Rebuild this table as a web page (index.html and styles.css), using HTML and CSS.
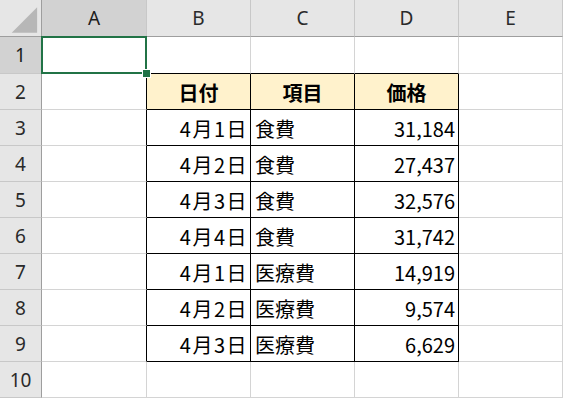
FILE: index.html
```html
<!DOCTYPE html>
<html lang="ja">
<head>
<meta charset="utf-8">
<link rel="stylesheet" href="styles.css">
</head>
<body>
<div class="sheet">
  <div class="grid">
    <div class="corner"><svg width="42" height="37" viewBox="0 0 42 37"><polygon points="12,33 38,33 38,7" fill="#b7b7b7"/></svg></div>
    <div class="ch sel">A</div>
    <div class="ch">B</div>
    <div class="ch">C</div>
    <div class="ch">D</div>
    <div class="ch">E</div>

    <div class="rh sel">1</div>
    <div class="c"></div>
    <div class="c tt"></div>
    <div class="c tt"></div>
    <div class="c tt"></div>
    <div class="c"></div>

    <div class="rh">2</div>
    <div class="c tl"></div>
    <div class="c t th">日付</div>
    <div class="c t th">項目</div>
    <div class="c t th">価格</div>
    <div class="c"></div>

    <div class="rh">3</div>
    <div class="c tl"></div>
    <div class="c t r d">4月1日</div>
    <div class="c t l">食費</div>
    <div class="c t r">31,184</div>
    <div class="c"></div>

    <div class="rh">4</div>
    <div class="c tl"></div>
    <div class="c t r d">4月2日</div>
    <div class="c t l">食費</div>
    <div class="c t r">27,437</div>
    <div class="c"></div>

    <div class="rh">5</div>
    <div class="c tl"></div>
    <div class="c t r d">4月3日</div>
    <div class="c t l">食費</div>
    <div class="c t r">32,576</div>
    <div class="c"></div>

    <div class="rh">6</div>
    <div class="c tl"></div>
    <div class="c t r d">4月4日</div>
    <div class="c t l">食費</div>
    <div class="c t r">31,742</div>
    <div class="c"></div>

    <div class="rh">7</div>
    <div class="c tl"></div>
    <div class="c t r d">4月1日</div>
    <div class="c t l">医療費</div>
    <div class="c t r">14,919</div>
    <div class="c"></div>

    <div class="rh">8</div>
    <div class="c tl"></div>
    <div class="c t r d">4月2日</div>
    <div class="c t l">医療費</div>
    <div class="c t r">9,574</div>
    <div class="c"></div>

    <div class="rh">9</div>
    <div class="c tl"></div>
    <div class="c t r d">4月3日</div>
    <div class="c t l">医療費</div>
    <div class="c t r">6,629</div>
    <div class="c"></div>

    <div class="rh">10</div>
    <div class="c"></div>
    <div class="c"></div>
    <div class="c"></div>
    <div class="c"></div>
    <div class="c"></div>
  </div>
  <div class="selection"></div>
  <div class="handle"></div>
</div>
</body>
</html>
```
FILE: styles.css
```css
html, body {
  margin: 0;
  padding: 0;
  background: #ffffff;
  overflow: hidden;
}
.sheet {
  position: relative;
  width: 563px;
  height: 398px;
  font-family: "Noto Sans CJK JP", "Noto Sans", sans-serif;
  color: #000;
}
.grid {
  display: grid;
  grid-template-columns: 42px 105px 104px 104px 104px 104px;
  grid-template-rows: 37px 37px repeat(9, 36px);
}
.grid > div {
  box-sizing: border-box;
  border-right: 1px solid #d4d4d4;
  border-bottom: 1px solid #d4d4d4;
  display: flex;
  align-items: center;
  font-size: 20px;
  overflow: hidden;
  white-space: nowrap;
}
.grid > .corner {
  background: #e6e6e6;
  border-right: 1px solid #9e9e9e;
  border-bottom: 1px solid #9e9e9e;
  padding: 0;
  align-items: flex-start;
}
.corner svg { display: block; }
.grid > .ch {
  background: #e6e6e6;
  border-right: 1px solid #c8c8c8;
  border-bottom: 1px solid #9e9e9e;
  justify-content: center;
  font-family: "Noto Sans", "Liberation Sans", sans-serif;
  font-size: 19px;
  color: #2a2a2a;
}
.grid > .rh {
  background: #e6e6e6;
  border-right: 1px solid #9e9e9e;
  border-bottom: 1px solid #c8c8c8;
  justify-content: center;
  font-family: "Noto Sans", "Liberation Sans", sans-serif;
  font-size: 19px;
  color: #2a2a2a;
}
.grid > .sel {
  background: #d2d2d2;
  color: #1d1d1d;
}
.grid > .tt { border-bottom-color: #000; }
.grid > .tl { border-right-color: #000; }
.grid > .t {
  border-right-color: #000;
  border-bottom-color: #000;
  padding-top: 2px;
}
.grid > .th {
  background: #fff2cc;
  justify-content: center;
  font-weight: bold;
}
.grid > .r {
  justify-content: flex-end;
  padding-right: 3px;
}
.grid > .d {
  letter-spacing: 1.5px;
  padding-right: 2px;
}
.grid > .l {
  justify-content: flex-start;
  padding-left: 4px;
}
.selection {
  position: absolute;
  left: 41px;
  top: 36px;
  width: 106px;
  height: 38px;
  box-sizing: border-box;
  border: 2px solid #217346;
}
.handle {
  position: absolute;
  left: 142px;
  top: 69px;
  width: 7px;
  height: 7px;
  background: #217346;
  border: 1px solid #ffffff;
}
```
